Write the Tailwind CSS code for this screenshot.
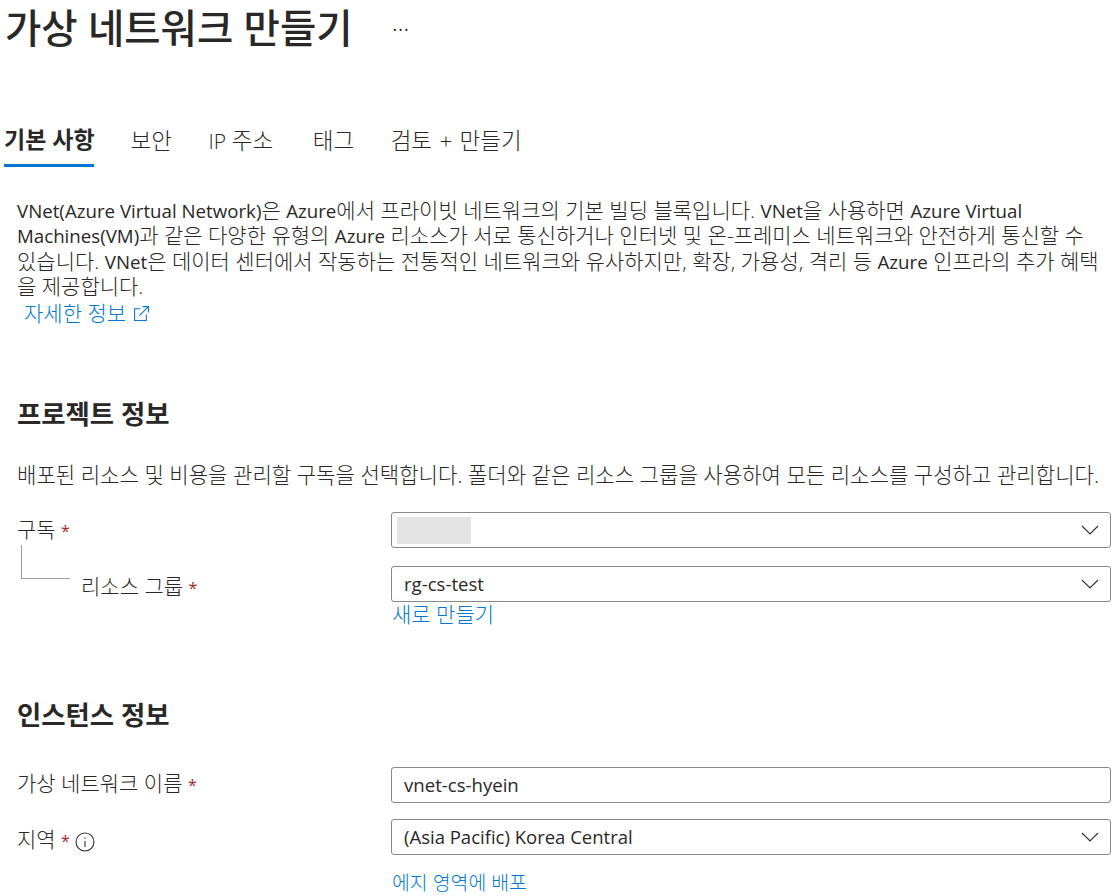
<!DOCTYPE html>
<html lang="ko">
<head>
  <meta charset="UTF-8">
  <title>가상 네트워크 만들기</title>
  <script src="https://cdn.jsdelivr.net/npm/@tailwindcss/browser@4"></script>
</head>
<body class="w-[1117px] h-[896px] overflow-hidden bg-white text-[#292827] text-[21px] font-light font-['Open_Sans','Noto_Sans_CJK_KR',sans-serif]">
  <!-- Title -->
  <header class="h-[103px] pl-[5px] flex items-start">
    <h1 class="text-[39.5px] leading-[56px] font-medium whitespace-nowrap">가상 네트워크 만들기</h1>
    <span class="ml-[40px] mt-[17px] text-[18px] leading-[24px] tracking-[1px] font-normal">···</span>
  </header>

  <!-- Tabs -->
  <nav class="h-[64px] pl-[4px] flex items-start gap-[36.5px] text-[22.5px] leading-[26px] whitespace-nowrap">
    <div class="h-[64px] pt-[23px] border-b-[3px] border-[#0078d4] w-[90px] text-[23px] font-semibold box-border">기본 사항</div>
    <div class="pt-[25px]">보안</div>
    <div class="pt-[25px]"><span class="text-[21px]">IP</span> 주소</div>
    <div class="pt-[25px] ml-[3px]">태그</div>
    <div class="pt-[25px] [word-spacing:1.5px]">검토 + 만들기</div>
  </nav>

  <!-- Intro -->
  <section class="pl-[17px] pt-[31px] leading-[25.4px] whitespace-nowrap">
    <p><span class="text-[18.7px] font-normal">VNet(Azure Virtual Network)</span>은 <span class="text-[18.7px] font-normal">Azure</span>에서 프라이빗 네트워크의 기본 빌딩 블록입니다. <span class="text-[18.7px] font-normal">VNet</span>을 사용하면 <span class="text-[18.7px] font-normal">Azure Virtual</span></p>
    <p><span class="text-[18.7px] font-normal">Machines(VM)</span>과 같은 다양한 유형의 <span class="text-[18.7px] font-normal">Azure</span> 리소스가 서로 통신하거나 인터넷 및 온-프레미스 네트워크와 안전하게 통신할 수</p>
    <p>있습니다. <span class="text-[18.7px] font-normal">VNet</span>은 데이터 센터에서 작동하는 전통적인 네트워크와 유사하지만, 확장, 가용성, 격리 등 <span class="text-[18.7px] font-normal">Azure</span> 인프라의 추가 혜택</p>
    <p>을 제공합니다.</p>
    <a class="ml-[7px] mt-[1px] flex items-center gap-[7px] text-[#0078d4]">자세한 정보
      <svg width="17" height="17" viewBox="0 0 16 16" fill="none" stroke="#0078d4" stroke-width="1"><path d="M7 3.5H1.5v11h11V9M6 10l8-8M9 1.5h5.5V7"/></svg>
    </a>
  </section>

  <!-- Project details -->
  <section class="pl-[17px] pr-[6px] pt-[72px]">
    <h2 class="text-[26.4px] leading-[32px] font-semibold">프로젝트 정보</h2>
    <p class="mt-[32px] leading-[26px] text-[21.1px] whitespace-nowrap">배포된 리소스 및 비용을 관리할 구독을 선택합니다. 폴더와 같은 리소스 그룹을 사용하여 모든 리소스를 구성하고 관리합니다.</p>

    <div class="mt-[24px] flex h-[36px]">
      <div class="w-[374px] pt-[4px] leading-[26px]">구독 <span class="text-[16px] font-normal text-[#a4262c]">*</span></div>
      <div class="flex-1 h-[36px] border border-[#8a8886] rounded-[3px] flex items-center justify-between pl-[5px] pr-[11px]">
        <div class="w-[74px] h-[27px] bg-[#e3e3e3]"></div>
        <svg width="18" height="10" viewBox="0 0 18 10" fill="none" stroke="#323130" stroke-width="1.1"><path d="M1 1l8 8 8-8"/></svg>
      </div>
    </div>

    <div class="mt-[18px] flex h-[36px] relative">
      <!-- tree connector from subscription to resource group -->
      <div class="absolute left-[4px] top-[-21px] w-[49px] h-[34px] border-l border-b border-[#a19f9d]"></div>
      <div class="w-[374px] pl-[64px] pt-[7px] leading-[26px]">리소스 그룹 <span class="text-[16px] font-normal text-[#a4262c]">*</span></div>
      <div class="flex-1 h-[36px] border border-[#8a8886] rounded-[3px] flex items-center justify-between pl-[12px] pr-[11px]">
        <span class="text-[18.6px] font-normal">rg-cs-test</span>
        <svg width="18" height="10" viewBox="0 0 18 10" fill="none" stroke="#323130" stroke-width="1.1"><path d="M1 1l8 8 8-8"/></svg>
      </div>
    </div>
    <a class="block ml-[375px] mt-[-1px] leading-[26px] text-[#0078d4]">새로 만들기</a>
  </section>

  <!-- Instance details -->
  <section class="pl-[17px] pr-[6px] pt-[72px]">
    <h2 class="text-[26.4px] leading-[32px] font-semibold">인스턴스 정보</h2>

    <div class="mt-[36px] flex h-[36px]">
      <div class="w-[374px] pt-[3px] leading-[26px]">가상 네트워크 이름 <span class="text-[16px] font-normal text-[#a4262c]">*</span></div>
      <div class="flex-1 h-[36px] border border-[#8a8886] rounded-[3px] flex items-center pl-[12px] text-[18.6px] font-normal">vnet-cs-hyein</div>
    </div>

    <div class="mt-[16px] flex h-[36px]">
      <div class="w-[374px] pt-[6px] leading-[26px] flex items-center gap-[5px]">
        <span>지역 <span class="text-[16px] font-normal text-[#a4262c]">*</span></span>
        <svg class="mt-[3px]" width="20" height="20" viewBox="0 0 20 20" fill="none" stroke="#323130" stroke-width="1.1"><circle cx="10" cy="10" r="9"/><path d="M10 9v6M10 5.2v1.6"/></svg>
      </div>
      <div class="flex-1 h-[36px] border border-[#8a8886] rounded-[3px] flex items-center justify-between pl-[12px] pr-[11px]">
        <span class="text-[18.5px] font-normal">(Asia Pacific) Korea Central</span>
        <svg width="18" height="10" viewBox="0 0 18 10" fill="none" stroke="#323130" stroke-width="1.1"><path d="M1 1l8 8 8-8"/></svg>
      </div>
    </div>
    <a class="block ml-[375px] mt-[15px] leading-[26px] text-[19.4px] text-[#0078d4]">에지 영역에 배포</a>
  </section>
</body>
</html>
